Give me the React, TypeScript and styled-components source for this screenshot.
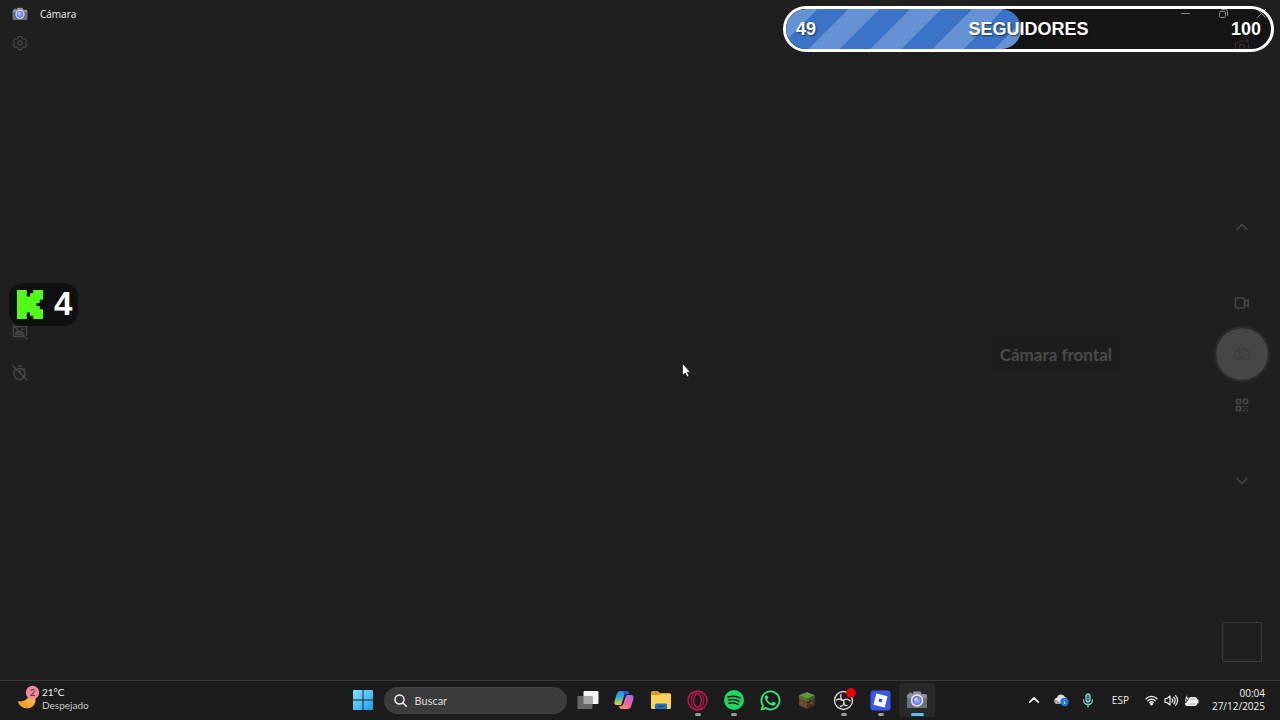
import React from "react";
import styled, { createGlobalStyle } from "styled-components";

const GlobalStyle = createGlobalStyle`
  * { box-sizing: border-box; }
  html, body { margin: 0; background: #1f1f1f; }
  body { overflow: hidden; font-family: Lato, "Open Sans", sans-serif; color: #f2f2f2; }
  button, input { font: inherit; color: inherit; }
`;

const Desktop = styled.div`
  position: relative;
  display: grid;
  grid-template-rows: 1fr 40px;
  min-height: 100vh;
  background: #1f1f1f;
`;

const CameraWindow = styled.main`
  display: grid;
  grid-template-rows: 28px 1fr;
  min-width: 0;
`;

const TitleBar = styled.header`
  display: flex;
  align-items: flex-start;
  justify-content: space-between;
  padding-left: 12px;
`;

const AppName = styled.h1`
  display: flex;
  align-items: center;
  gap: 12px;
  height: 27px;
  margin: 0;
  font-family: "Open Sans", sans-serif;
  font-size: 10px;
  line-height: 16px;
  font-weight: 400;
`;

const WindowControls = styled.div`
  display: flex;
`;

const PlainButton = styled.button`
  display: grid;
  place-items: center;
  padding: 0;
  border: 0;
  background: none;
  svg { display: block; }
`;

const WindowButton = styled(PlainButton)`
  width: 38px;
  height: 26px;
  color: #c4c4c4;
`;

const Viewfinder = styled.section`
  display: grid;
  grid-template-columns: 40px 1fr 76px;
`;

const Rail = styled.aside`
  display: grid;
  grid-template-rows: 1fr auto 1fr;
  justify-items: center;
`;

const RailMiddle = styled.div<{ $gap: number; $lift?: number }>`
  display: flex;
  flex-direction: column;
  align-items: center;
  gap: ${(p) => p.$gap}px;
  padding-bottom: ${(p) => p.$lift ?? 0}px;
`;

const RailButton = styled(PlainButton)<{ $top?: number }>`
  width: 24px;
  height: 24px;
  margin-top: ${(p) => p.$top ?? 0}px;
  color: #464646;
`;

const Shutter = styled(PlainButton)`
  width: 56px;
  height: 56px;
  border: 2px solid #2b2b2b;
  border-radius: 50%;
  background: #464646;
  background-clip: padding-box;
  color: #3e3e3e;
`;

const Thumbnail = styled(PlainButton)`
  align-self: end;
  width: 40px;
  height: 40px;
  margin-bottom: 18px;
  border: 1px solid #3c3c3c;
  border-radius: 1px;
`;

const Preview = styled.div`
  display: flex;
  align-items: center;
  justify-content: flex-end;
  padding-right: 84px;
`;

const DeviceLabel = styled.output`
  padding: 7px 8px 5px;
  border-radius: 3px;
  background: #1d1d1d;
  color: #4a4a4a;
  font-size: 17px;
  line-height: 22px;
  font-weight: 700;
`;

const Goal = styled.section`
  position: absolute;
  top: 6px;
  right: 6px;
  width: 491px;
  max-width: calc(100% - 12px);
  height: 46px;
  overflow: hidden;
  border: 3px solid #fff;
  border-radius: 23px;
  background: rgba(0, 0, 0, 0.3);
  font-family: "Liberation Sans", Arial, sans-serif;
  font-size: 18px;
  line-height: 40px;
  font-weight: 700;
  color: #fff;
  text-shadow: 1px 1px 2px rgba(0, 0, 0, 0.6);
  display: grid;
`;

const GoalFill = styled.div`
  grid-area: 1 / 1;
  height: 40px;
  border-radius: 20px;
  background: repeating-linear-gradient(135deg, #6592d5 0 22px, #3b74c7 22px 44px);
`;

const GoalText = styled.div`
  grid-area: 1 / 1;
  display: grid;
  grid-template-columns: 1fr auto 1fr;
  padding: 0 10px;
  span:last-child { text-align: right; }
`;

const KickCounter = styled.div`
  position: absolute;
  left: 9px;
  top: 283px;
  display: flex;
  align-items: center;
  gap: 11px;
  height: 43px;
  padding: 0 6px 0 8px;
  border-radius: 14px;
  background: #101010;
  font-family: "Liberation Sans", Arial, sans-serif;
  font-size: 33px;
  line-height: 41px;
  font-weight: 700;
  color: #fff;
`;

const Count = styled.span`
  padding-bottom: 2px;
`;

const Pointer = styled.svg`
  position: absolute;
  left: calc(50% + 42px);
  top: 363px;
`;

const Taskbar = styled.footer`
  display: grid;
  grid-template-columns: 1fr auto 1fr;
  align-items: center;
  padding-bottom: 1px;
  border-top: 1px solid #3a3a3a;
  background: #1c1c1c;
  font-size: 11px;
  line-height: 13px;
`;

const Weather = styled.button`
  display: flex;
  align-items: center;
  justify-self: start;
  gap: 3px;
  padding: 0 0 2px 16px;
  border: 0;
  background: none;
  text-align: left;
  font-size: 10px;
`;

const Condition = styled.span`
  display: block;
  color: #c8c8c8;
`;

const Pinned = styled.nav`
  display: flex;
  align-items: center;
`;

const StartButton = styled(PlainButton)`
  width: 36px;
  height: 34px;
  margin-right: 3px;
`;

const Search = styled.label`
  display: flex;
  align-items: center;
  gap: 8px;
  width: 183px;
  height: 27px;
  padding: 0 9px;
  margin-right: 3px;
  border-radius: 14px;
  border: 1px solid #424242;
  background: #3b3b3b;
  input {
    width: 100%;
    min-width: 0;
    padding: 0;
    border: 0;
    outline: 0;
    background: none;
  }
  input::placeholder { color: #dcdcdc; opacity: 1; }
  svg { flex: none; }
`;

const AppRow = styled.div`
  display: grid;
  grid-template-columns: repeat(10, 1fr);
  width: 366px;
`;

const AppButton = styled(PlainButton)<{ $state?: "running" | "active" }>`
  position: relative;
  height: 34px;
  border-radius: 4px;
  background: ${(p) => (p.$state === "active" ? "#292929" : "none")};
  &::after {
    content: "";
    position: absolute;
    bottom: 1px;
    display: ${(p) => (p.$state ? "block" : "none")};
    width: ${(p) => (p.$state === "active" ? 13 : 6)}px;
    height: 3px;
    border-radius: 2px;
    background: ${(p) => (p.$state === "active" ? "#5cc0ee" : "#9a9a9a")};
  }
`;

const Tray = styled.div`
  display: flex;
  align-items: center;
  justify-self: end;
  padding-right: 15px;
`;

const TrayButton = styled(PlainButton)`
  width: 27px;
  height: 32px;
`;

const Language = styled(PlainButton)`
  height: 32px;
  padding: 0 10px;
  font-family: "Open Sans", sans-serif;
  font-size: 10px;
`;

const QuickSettings = styled(PlainButton)`
  grid-template-columns: repeat(3, 20px);
  height: 32px;
  margin-left: 3px;
`;

const Clock = styled.button`
  padding: 0 0 1px;
  margin-left: 10px;
  border: 0;
  background: none;
  text-align: right;
  font-family: "Open Sans", sans-serif;
  font-size: 10px;
  time { display: block; }
`;

const line = { fill: "none", stroke: "currentColor", strokeLinecap: "round", strokeLinejoin: "round" } as const;

function CameraLogo({ size }: { size: number }) {
  return (
    <svg width={size} height={size} viewBox="0 0 22 22">
      <path d="M3 3.5h3V6H3z" fill="#777f87" />
      <path d="M7.5 2.5h7L16 6H6z" fill="#8d969f" />
      <rect x="1" y="5" width="20" height="14" rx="1.5" fill="#8a939c" />
      <path d="M1 9h20v8.5a1.500 1.500 0 0 1-1.500 1.500h-17A1.500 1.500 0 0 1 1 17.500z" fill="#69727b" />
      <circle cx="11" cy="11.500" r="6.200" fill="#e4e4f2" />
      <circle cx="11" cy="11.500" r="4.600" fill="#5f68cc" />
      <circle cx="11" cy="11.500" r="3.400" fill="#9095ee" />
      <circle cx="10" cy="10.400" r="1.700" fill="#b6d4ff" />
    </svg>
  );
}

function Chevron({ up, size = 14, weight = 1.5 }: { up?: boolean; size?: number; weight?: number }) {
  return (
    <svg width={size} height={size} viewBox="0 0 14 14" {...line} strokeWidth={weight}>
      <path d={up ? "M2 9.500 7 4.500l5 5" : "M2 4.500l5 5 5-5"} />
    </svg>
  );
}

function Gear() {
  return (
    <svg width="16" height="16" viewBox="0 0 16 16" {...line} strokeWidth="1.100">
      <path d="M6.500 1.500h3l.5 2 1.300.8 2-.6 1.500 2.600L13.300 7.700v.8l1.500 1.300-1.500 2.600-2-.5-1.300.8-.5 1.900h-3L6 12.700l-1.300-.8-2 .5-1.500-2.600 1.500-1.300v-.8L1.200 6.300l1.500-2.600 2 .6L6 3.500z" />
      <circle cx="8" cy="8" r="2.100" />
    </svg>
  );
}

function CaptionsOff() {
  return (
    <svg width="16" height="16" viewBox="0 0 16 16" {...line} strokeWidth="1.300">
      <path d="M4 2.500h9.500a1 1 0 0 1 1 1v8M12 12.500H2.500a1 1 0 0 1-1-1v-8a1 1 0 0 1 .5-.9M1 1l14 14" />
      <path d="M3.500 9.500l2-2.500 1.500 2 2-2 3 2.500M9.500 5h2.500M4 10.500h6" />
    </svg>
  );
}

function TimerOff() {
  return (
    <svg width="16" height="16" viewBox="0 0 16 16" {...line} strokeWidth="1.400">
      <path d="M6.500 1h3M1 1l14 14M6 3.800A5.600 5.600 0 0 1 12.800 11M11.600 12.800A5.600 5.600 0 0 1 3.500 5M8 5.500V8M12 3.500l1 1" />
    </svg>
  );
}

function SwitchCamera() {
  return (
    <svg width="16" height="16" viewBox="0 0 16 16" {...line} strokeWidth="1.100">
      <path d="M9.500 3H6L5 4.500H2.500a1 1 0 0 0-1 1V13a1 1 0 0 0 1 1h11a1 1 0 0 0 1-1V6M11 3h3.500M13 1.500 14.500 3 13 4.500" />
      <circle cx="8" cy="9" r="2.600" />
    </svg>
  );
}

function VideoIcon() {
  return (
    <svg width="16" height="16" viewBox="0 0 16 16" {...line} strokeWidth="1.500">
      <rect x="1.500" y="3" width="9" height="10" rx="1.500" />
      <path d="M10.500 7l3.700-2.500v7L10.500 9" />
    </svg>
  );
}

function PhotoIcon() {
  return (
    <svg width="18" height="18" viewBox="0 0 18 18" {...line} strokeWidth="1.300">
      <path d="M6 4h6l1 2h2a1 1 0 0 1 1 1v6a1 1 0 0 1-1 1H3a1 1 0 0 1-1-1V7a1 1 0 0 1 1-1h2z" />
      <path d="M6.500 8v2a2.500 2.500 0 0 0 5 0V8" />
    </svg>
  );
}

function QrIcon() {
  return (
    <svg width="14" height="14" viewBox="0 0 14 14" {...line} strokeWidth="1.700">
      <rect x="1.500" y="1.500" width="4" height="4" rx=".5" />
      <rect x="8.500" y="1.500" width="4" height="4" rx=".5" />
      <rect x="1.500" y="8.500" width="4" height="4" rx=".5" />
      <path d="M8.500 8.500h.6M12.400 8.500h.1M10.500 10.500h.1M8.500 12.500h.1M12.500 12.500h.1" />
    </svg>
  );
}

function KickLogo() {
  return (
    <svg width="26" height="29" viewBox="1.333 0 21.334 24" preserveAspectRatio="none">
      <path fill="#53fc18" d="M1.333 0h8v5.333H12V2.667h2.667V0h8v8H20v2.667h-2.667v2.666H20V16h2.667v8h-8v-2.667H12v-2.666H9.333V24h-8Z" />
    </svg>
  );
}

function MoonBadge() {
  return (
    <svg width="23" height="28" viewBox="0 0 23 28">
      <defs>
        <linearGradient id="moon" x1="0" y1="1" x2="1" y2="0">
          <stop offset="0" stopColor="#ee8e22" />
          <stop offset="1" stopColor="#ffc95a" />
        </linearGradient>
      </defs>
      <path d="M12 7c2 5-1 10-10.500 9.500C4 22 9 24.500 14 23c4-1.400 6-5.500 5.500-10z" fill="url(#moon)" />
      <circle cx="16.500" cy="7.500" r="6.700" fill="#ec8b9b" />
      <text x="16.500" y="11" textAnchor="middle" fontFamily="Lato, sans-serif" fontSize="9" fill="#5c1c2a">2</text>
    </svg>
  );
}

function WindowsLogo() {
  return (
    <svg width="20" height="20" viewBox="0 0 21 21">
      <defs>
        <linearGradient id="win" x1="0" y1="0" x2="1" y2="1">
          <stop offset="0" stopColor="#7fe6fb" />
          <stop offset="1" stopColor="#1f9df0" />
        </linearGradient>
      </defs>
      <path fill="url(#win)" d="M1 0H10V10H0V1a1 1 0 0 1 1-1zM11 0h9a1 1 0 0 1 1 1V10H11zM0 11H10v10H1a1 1 0 0 1-1-1zM11 11h10v9a1 1 0 0 1-1 1H11z" />
    </svg>
  );
}

function TaskView() {
  return (
    <svg width="22" height="20" viewBox="0 0 22 20">
      <rect x="6.500" y="1" width="15" height="13" rx="1" fill="#f4f4f4" />
      <rect x=".5" y="6" width="15" height="13" rx="1" fill="#666" />
      <path d="M6.500 6h9v8h-9z" fill="#a9a9a9" />
    </svg>
  );
}

function Copilot() {
  return (
    <svg width="20" height="20" viewBox="0 0 20 20">
      <defs>
        <linearGradient id="cpA" x1="0" y1="0" x2="0" y2="1">
          <stop offset="0" stopColor="#2b8df0" />
          <stop offset=".5" stopColor="#36b9c0" />
          <stop offset="1" stopColor="#f0d03b" />
        </linearGradient>
        <linearGradient id="cpB" x1="1" y1="0" x2="0" y2="1">
          <stop offset="0" stopColor="#a068f4" />
          <stop offset=".5" stopColor="#ee60a4" />
          <stop offset="1" stopColor="#ff9a4c" />
        </linearGradient>
      </defs>
      <path d="M6.500 1h6c1.500 0 2 1 2.500 3h-2c-1.500 0-2 1-2.500 2.500L8.500 13c-.5 1.500-1 2-2.500 2H3C.5 15 0 13 .7 10.500L3 3.500C3.600 1.800 4.500 1 6.500 1z" fill="url(#cpA)" />
      <path d="M13.500 19h-6C6 19 5.500 18 5 16h2c1.500 0 2-1 2.500-2.500L11.500 7c.5-1.500 1-2 2.500-2h3c2.500 0 3 2 2.300 4.500L17 16.500c-.6 1.700-1.500 2.500-3.500 2.500z" fill="url(#cpB)" />
      <path d="M12.500 1c1.500 0 2 1 2.500 3h-2c-1.500 0-2 1-2.300 2L9 1z" fill="#2459d8" />
      <path d="M11 4.500 7.500 15.500" stroke="#1c1c1c" strokeWidth="1" />
    </svg>
  );
}

function Folder() {
  return (
    <svg width="22" height="20" viewBox="0 0 22 20">
      <path d="M1 2.500A1.500 1.500 0 0 1 2.500 1H8l2 2h9.500A1.500 1.500 0 0 1 21 4.500V8H1z" fill="#d99a1e" />
      <path d="M1 5h8l2-1h10v13.500a1.500 1.500 0 0 1-1.500 1.500h-17A1.500 1.500 0 0 1 1 17.500z" fill="#f8d35c" />
      <path d="M5 19v-4a1.500 1.500 0 0 1 1.500-1.500h9A1.500 1.500 0 0 1 17 15v4z" fill="#1b70b8" />
      <path d="M8 16h6v1H8z" fill="#0d4c87" />
    </svg>
  );
}

function Opera() {
  return (
    <svg width="21" height="21" viewBox="0 0 21 21" fill="none" stroke="#c3184c">
      <circle cx="10.500" cy="10.500" r="9.500" strokeWidth="1.400" />
      <ellipse cx="10.500" cy="10.500" rx="6.300" ry="9" strokeWidth="1" />
      <ellipse cx="10.500" cy="10.500" rx="3.800" ry="7" strokeWidth="1.400" />
    </svg>
  );
}

function Spotify() {
  return (
    <svg width="20" height="20" viewBox="0 0 20 20">
      <circle cx="10" cy="10" r="10" fill="#1ed760" />
      <path d="M4 7c4.500-1.300 9-.8 12.300 1M4.600 10.200c3.800-1.100 7.500-.7 10.500 1M5.200 13.200c3.200-.8 6.200-.5 8.800 1" fill="none" stroke="#161616" strokeWidth="1.600" strokeLinecap="round" />
    </svg>
  );
}

function WhatsApp() {
  return (
    <svg width="21" height="21" viewBox="0 0 24 24">
      <path fill="#3fe07a" d="M12 .5a11.400 11.400 0 0 0-9.800 17.200L.5 23.500l6-1.600A11.400 11.400 0 1 0 12 .5zm0 2.200a9.200 9.200 0 1 1-4.800 17l-.4-.2-3.200.9.900-3.200-.3-.4A9.200 9.200 0 0 1 12 2.700z" />
      <path fill="#3fe07a" d="M8.400 6.500c-.3-.6-.5-.6-.9-.6-1 0-2 1.200-2 2.800 0 3.800 5.300 9.200 9.300 9.200 1.800 0 3.200-1.200 3.200-2.600 0-.5 0-.6-.4-.8l-2.200-1.100c-.5-.2-.7-.1-1 .3l-.9 1.100c-.2.300-.5.300-.9.100-1.900-.8-3.400-2.200-4.300-3.900-.2-.4-.1-.6.200-.8l.9-1.100c.2-.3.100-.5 0-.8z" />
    </svg>
  );
}

function GrassBlock() {
  return (
    <svg width="18" height="19" viewBox="0 0 19 20">
      <path d="M9.500 1 18 4.500 9.500 8.500 1 4.500z" fill="#5f963b" />
      <path d="M1 4.500l8.500 4V19L1 15z" fill="#6b4730" />
      <path d="M18 4.500l-8.500 4V19l8.500-4z" fill="#4c301f" />
      <path d="M1 4.500l8.500 4v3l-2-1v-1l-2-1v1.500l-2-1V7.500L1 7z" fill="#4c7a31" />
      <path d="M18 4.500l-8.500 4v3l2-1v-1l2-1v1.500l2-1V7.500L18 7z" fill="#3c6326" />
      <path d="M3 11l2 1v2l-2-1zM13 12l2-1v2l-2 1z" fill="#83593d" />
    </svg>
  );
}

function Obs() {
  return (
    <svg width="24" height="24" viewBox="0 0 24 24">
      <circle cx="11.500" cy="12.500" r="9" fill="#1f1f1f" stroke="#d8d8d8" strokeWidth="1.400" />
      <g fill="none" stroke="#d8d8d8" strokeWidth="1.300" strokeLinecap="round">
        <path d="M9 6.500c-.8 3.200.3 5.500 2.500 6" />
        <path d="M18 12.800c-2.500-2.300-5-2.200-6.500-.3" />
        <path d="M8.500 18.500c3.200-.8 4.300-3.200 3-6" />
        <path d="M4.500 12c2-1.300 4-1.300 5.500.2M15 17.500c-2 .2-3.300-.8-3.500-2.500" />
      </g>
      <circle cx="19" cy="4.800" r="4.800" fill="#e8060d" />
    </svg>
  );
}

function Roblox() {
  return (
    <svg width="21" height="21" viewBox="0 0 21 21">
      <rect x=".5" y=".5" width="20" height="20" rx="3" fill="#3b55ec" />
      <path fillRule="evenodd" fill="#fff" d="M6.300 3.500 17.500 6.300 14.700 17.500 3.500 14.700zM9.200 8.500 8.500 11.800 11.800 12.500 12.500 9.200z" />
    </svg>
  );
}

function OneDrive() {
  return (
    <svg width="15" height="14" viewBox="0 0 15 14">
      <path d="M3.500 11A3.300 3.300 0 0 1 3 4.500 4.300 4.300 0 0 1 11 4c1.500.5 2.500 2 2 4l-5 3z" fill="#dedede" />
      <path d="M3.500 11A3.300 3.300 0 0 1 1 6l7 5z" fill="#a8a8a8" />
      <circle cx="10.500" cy="9" r="4.200" fill="#1d79d4" />
      <path d="M10.500 8.500v2.600M10.500 6.600v.3" stroke="#d9ecff" strokeWidth="1.200" />
    </svg>
  );
}

function Mic() {
  return (
    <svg width="12" height="15" viewBox="0 0 12 15" fill="none" stroke="#8ccfcc" strokeWidth="1.300" strokeLinecap="round">
      <rect x="4" y="1" width="4" height="8" rx="2" fill="#3f6f70" />
      <path d="M1.500 7a4.500 4.500 0 0 0 9 0M6 11.500V14" />
    </svg>
  );
}

function Wifi() {
  return (
    <svg width="13" height="12" viewBox="0 0 13 12" {...line} strokeWidth="1.300">
      <path d="M1 4.800a7.600 7.600 0 0 1 11 0M2.800 6.800a5.200 5.200 0 0 1 7.400 0M4.600 8.600a2.700 2.700 0 0 1 3.800 0" />
      <circle cx="6.500" cy="10" r=".8" fill="currentColor" />
    </svg>
  );
}

function Volume() {
  return (
    <svg width="15" height="13" viewBox="0 0 15 13" {...line} strokeWidth="1.200">
      <path d="M1 4.500h2L6 2v9L3 8.500H1zM8 4.800a2.500 2.500 0 0 1 0 3.400M9.800 3.200a4.600 4.600 0 0 1 0 6.600M11.600 1.700a6.800 6.800 0 0 1 0 9.600" />
    </svg>
  );
}

function Battery() {
  return (
    <svg width="15" height="13" viewBox="0 0 15 13">
      <rect x="1.500" y="3.500" width="11" height="8" rx="1.500" fill="#efefef" stroke="#efefef" />
      <path d="M13 5.500h1.500v4H13z" fill="#efefef" />
      <path d="M3.500 0 .5 5h2L1.500 9 5.500 3.500H3.500z" fill="#fff" stroke="#1c1c1c" strokeWidth=".8" />
      <path d="M6.500 5h5M5 10h6.500" stroke="#888" strokeWidth=".6" />
    </svg>
  );
}

const GOAL_PERCENT = 48.5;

const apps: { name: string; icon: React.ReactNode; state?: "running" | "active" }[] = [
  { name: "Vista de tareas", icon: <TaskView /> },
  { name: "Copilot", icon: <Copilot /> },
  { name: "Explorador de archivos", icon: <Folder /> },
  { name: "Opera", icon: <Opera />, state: "running" },
  { name: "Spotify", icon: <Spotify />, state: "running" },
  { name: "WhatsApp", icon: <WhatsApp /> },
  { name: "Minecraft", icon: <GrassBlock /> },
  { name: "OBS Studio", icon: <Obs />, state: "running" },
  { name: "Roblox", icon: <Roblox />, state: "running" },
  { name: "Cámara", icon: <CameraLogo size={22} />, state: "active" },
];

export default function App() {
  return (
    <>
      <GlobalStyle />
      <Desktop>
        <CameraWindow>
          <TitleBar>
            <AppName>
              <CameraLogo size={16} />
              Cámara
            </AppName>
            <WindowControls>
              <WindowButton aria-label="Minimizar">
                <svg width="9" height="9" viewBox="0 0 9 9" {...line}><path d="M.5 4.500h8" /></svg>
              </WindowButton>
              <WindowButton aria-label="Restaurar">
                <svg width="9" height="9" viewBox="0 0 9 9" {...line}>
                  <rect x=".5" y="2.500" width="6" height="6" rx="1" />
                  <path d="M2.500.5h4a2 2 0 0 1 2 2v4" />
                </svg>
              </WindowButton>
              <WindowButton aria-label="Cerrar">
                <svg width="9" height="9" viewBox="0 0 9 9" {...line}><path d="M.5.5l8 8M8.500.5l-8 8" /></svg>
              </WindowButton>
            </WindowControls>
          </TitleBar>
          <Viewfinder>
            <Rail>
              <RailButton $top={3} aria-label="Configuración"><Gear /></RailButton>
              <RailMiddle $gap={17} $lift={3}>
                <RailButton aria-label="Subtítulos desactivados"><CaptionsOff /></RailButton>
                <RailButton aria-label="Temporizador desactivado"><TimerOff /></RailButton>
              </RailMiddle>
            </Rail>
            <Preview>
              <DeviceLabel>Cámara frontal</DeviceLabel>
            </Preview>
            <Rail>
              <RailButton $top={6} aria-label="Cambiar cámara"><SwitchCamera /></RailButton>
              <RailMiddle $gap={52}>
                <RailButton aria-label="Anterior"><Chevron up /></RailButton>
                <RailMiddle $gap={11}>
                  <RailButton aria-label="Modo vídeo"><VideoIcon /></RailButton>
                  <Shutter aria-label="Tomar foto"><PhotoIcon /></Shutter>
                  <RailButton aria-label="Modo código de barras"><QrIcon /></RailButton>
                </RailMiddle>
                <RailButton aria-label="Siguiente"><Chevron /></RailButton>
              </RailMiddle>
              <Thumbnail aria-label="Galería" />
            </Rail>
          </Viewfinder>
        </CameraWindow>

        <Taskbar>
          <Weather>
            <MoonBadge />
            <span>
              21°C
              <Condition>Despejado</Condition>
            </span>
          </Weather>
          <Pinned>
            <StartButton aria-label="Inicio"><WindowsLogo /></StartButton>
            <Search>
              <svg width="13" height="13" viewBox="0 0 13 13" {...line} strokeWidth="1.500" aria-hidden="true">
                <circle cx="5.500" cy="5.500" r="4.500" />
                <path d="M9 9l3.300 3.300" />
              </svg>
              <input type="search" placeholder="Buscar" aria-label="Buscar" />
            </Search>
            <AppRow>
              {apps.map((app) => (
                <AppButton key={app.name} aria-label={app.name} $state={app.state}>{app.icon}</AppButton>
              ))}
            </AppRow>
          </Pinned>
          <Tray>
            <TrayButton aria-label="Iconos ocultos"><Chevron up size={12} weight={2} /></TrayButton>
            <TrayButton aria-label="OneDrive"><OneDrive /></TrayButton>
            <TrayButton aria-label="Micrófono"><Mic /></TrayButton>
            <Language>ESP</Language>
            <QuickSettings aria-label="Red, volumen y batería">
              <Wifi />
              <Volume />
              <Battery />
            </QuickSettings>
            <Clock>
              <time>00:04</time>
              <time>27/12/2025</time>
            </Clock>
          </Tray>
        </Taskbar>

        <Goal aria-label="Meta de seguidores">
          <GoalFill style={{ width: `${GOAL_PERCENT}%` }} />
          <GoalText>
            <span>49</span>
            <span>SEGUIDORES</span>
            <span>100</span>
          </GoalText>
        </Goal>
        <KickCounter>
          <KickLogo />
          <Count>4</Count>
        </KickCounter>
        <Pointer width="9" height="15" viewBox="0 0 9 15">
          <path d="M.5.500v12l2.700-2.500 1.900 4 2-1-1.900-3.800H8.500z" fill="#fff" stroke="#111" strokeWidth=".7" />
        </Pointer>
      </Desktop>
    </>
  );
}
